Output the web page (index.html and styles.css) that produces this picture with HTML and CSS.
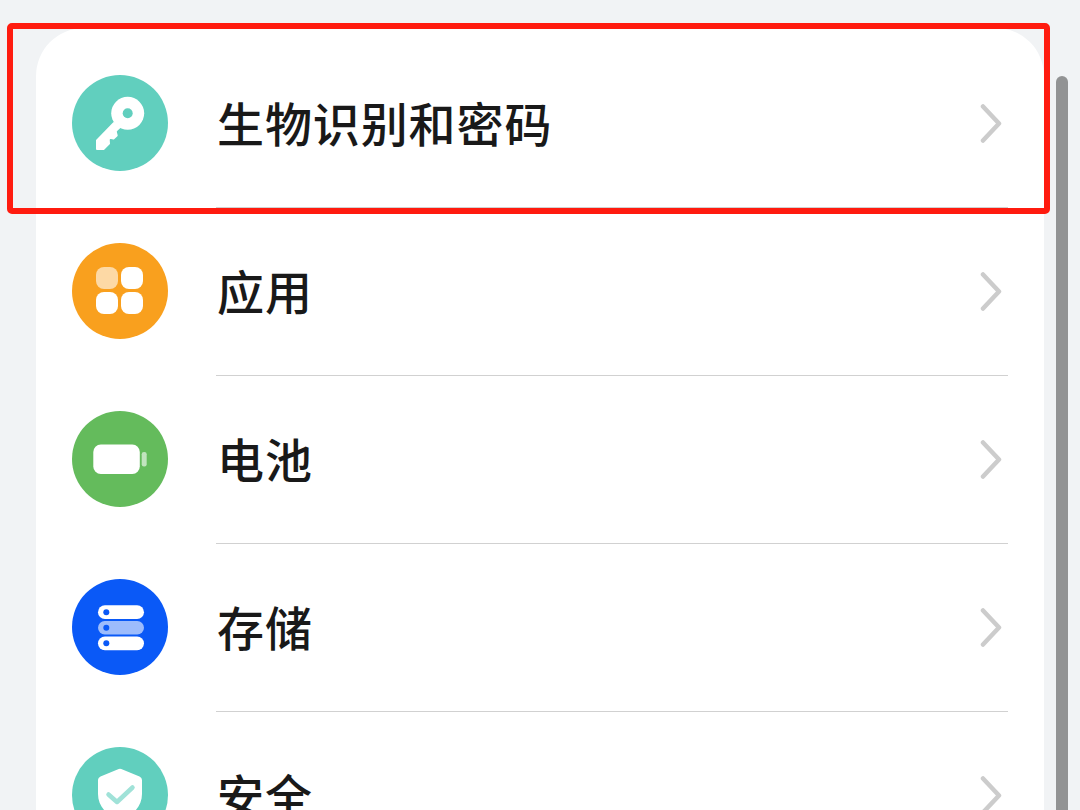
FILE: index.html
```html
<!DOCTYPE html>
<html lang="zh-CN">
<head>
    <meta charset="UTF-8">
    <meta name="viewport" content="width=device-width, initial-scale=1.0">
    <title>设置</title>
    <link rel="stylesheet" href="styles.css">
</head>
<body>
    <ul class="menu">
        <li class="item">
            <svg class="icon teal" viewBox="0 0 96 96">
                <path d="M42 48 L25 65.500 V74 H31.500 L37 68.500 L36.700 64.500 L38 62.700 L41.500 63.500 L44.700 60.500 L43.700 56.500 L45 54.700 L48 52Z" fill="#fff" stroke="#fff" stroke-width="2" stroke-linejoin="round"/>
                <circle cx="55.700" cy="38.300" r="16.500" fill="#fff"/>
                <circle class="hole" cx="55.700" cy="38.300" r="5"/>
            </svg>
            <span class="label">生物识别和密码</span>
            <svg class="arrow" viewBox="0 0 24 40"><path d="M5 2.500 L21 19.500 L5 36.500"/></svg>
        </li>
        <li class="item">
            <svg class="icon orange" viewBox="0 0 96 96" fill="#fff">
                <rect x="24" y="24" width="22" height="22" rx="8" opacity=".6"/>
                <rect x="49" y="24" width="22" height="22" rx="8"/>
                <rect x="24" y="49" width="22" height="22" rx="8"/>
                <rect x="49" y="49" width="22" height="22" rx="8"/>
            </svg>
            <span class="label">应用</span>
            <svg class="arrow" viewBox="0 0 24 40"><path d="M5 2.500 L21 19.500 L5 36.500"/></svg>
        </li>
        <li class="item">
            <svg class="icon green" viewBox="0 0 96 96" fill="#fff">
                <rect x="21.300" y="33.500" width="46.500" height="29.500" rx="7.500"/>
                <rect x="69.700" y="41" width="5" height="14.500" rx="2.200" opacity=".6"/>
            </svg>
            <span class="label">电池</span>
            <svg class="arrow" viewBox="0 0 24 40"><path d="M5 2.500 L21 19.500 L5 36.500"/></svg>
        </li>
        <li class="item">
            <svg class="icon blue" viewBox="0 0 96 96" fill="#fff">
                <rect x="26" y="26.300" width="46" height="13.700" rx="6.850"/>
                <rect x="26" y="42" width="46" height="13.500" rx="6.750" opacity=".6"/>
                <rect x="26" y="57.500" width="46" height="13.700" rx="6.850"/>
                <circle class="dot" cx="34.300" cy="33.200" r="3"/>
                <circle class="dot" cx="34.300" cy="48.800" r="3"/>
                <circle class="dot" cx="34.300" cy="64.300" r="3"/>
            </svg>
            <span class="label">存储</span>
            <svg class="arrow" viewBox="0 0 24 40"><path d="M5 2.500 L21 19.500 L5 36.500"/></svg>
        </li>
        <li class="item">
            <svg class="icon teal" viewBox="0 0 96 96">
                <path d="M45.500 22.500 Q48 21.200 50.500 22.500 L67.500 29.500 Q70 30.500 70 33 V47 C70 60 60 69 48 74 C36 69 26 60 26 47 V33 Q26 30.500 28.500 29.500Z" fill="#fff"/>
                <path class="check" d="M36.500 47.500 L45 55 L60.500 40.500"/>
            </svg>
            <span class="label">安全</span>
            <svg class="arrow" viewBox="0 0 24 40"><path d="M5 2.500 L21 19.500 L5 36.500"/></svg>
        </li>
    </ul>
    <div class="highlight"></div>
    <div class="scrollbar"></div>
</body>
</html>
```
FILE: styles.css
```css
*,
*::before,
*::after {
    box-sizing: border-box;
}
body {
    margin: 0;
    height: 100vh;
    overflow: hidden;
    padding: 28px 36px 0;
    background: #f1f3f5;
    color: #191919;
    font-family: 'Noto Sans CJK SC', sans-serif;
    position: relative;
}
.menu {
    list-style: none;
    margin: 0;
    padding: 12px 36px;
    background: #fff;
    border-radius: 48px;
}
.item {
    display: flex;
    align-items: center;
    height: 168px;
    padding-bottom: 2px;
    position: relative;
}
/* divider starts under the label, not under the icon */
.item:not(:last-child)::after {
    content: '';
    position: absolute;
    left: 144px;
    right: 0;
    bottom: 0;
    height: 1px;
    background: #d1d1d1;
}
.icon {
    width: 96px;
    height: 96px;
    border-radius: 50%;
    flex: none;
}
.teal {
    background: #61cfbe;
}
.orange {
    background: #f9a01e;
}
.green {
    background: #64bb5c;
}
.blue {
    background: #0a59f7;
}
.hole {
    fill: #61cfbe;
}
.dot {
    fill: #0a59f7;
}
.check {
    fill: none;
    stroke: #a0e2d8;
    stroke-width: 4.5;
    stroke-linecap: round;
    stroke-linejoin: round;
}
.label {
    flex: 1;
    margin-left: 49px;
    padding-bottom: 2px;
    font-size: 47px;
    font-weight: 500;
    letter-spacing: 0.9px;
    line-height: 72px;
}
.arrow {
    width: 24px;
    height: 40px;
    margin: 2px 6px 0 0;
    fill: none;
    stroke: #ccc;
    stroke-width: 4.5;
    stroke-linecap: round;
    stroke-linejoin: round;
}
.highlight {
    position: absolute;
    top: 22.5px;
    left: 6.5px;
    width: 1043px;
    height: 191px;
    border: 6px solid #ff1b0f;
    border-radius: 5px;
}
.scrollbar {
    position: absolute;
    top: 76px;
    right: 12px;
    bottom: 0;
    width: 12px;
    border-radius: 6px 6px 0 0;
    background: #929394;
}
```
